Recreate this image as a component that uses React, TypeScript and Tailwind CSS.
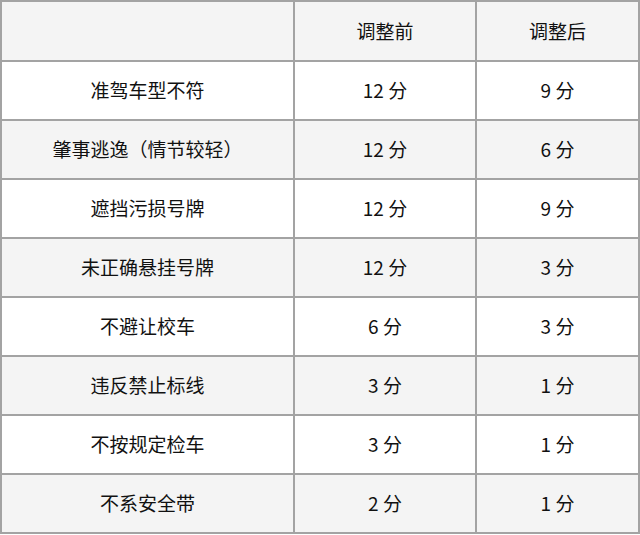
const rows = [
  { name: "准驾车型不符", before: "12 分", after: "9 分" },
  { name: "肇事逃逸（情节较轻）", before: "12 分", after: "6 分" },
  { name: "遮挡污损号牌", before: "12 分", after: "9 分" },
  { name: "未正确悬挂号牌", before: "12 分", after: "3 分" },
  { name: "不避让校车", before: "6 分", after: "3 分" },
  { name: "违反禁止标线", before: "3 分", after: "1 分" },
  { name: "不按规定检车", before: "3 分", after: "1 分" },
  { name: "不系安全带", before: "2 分", after: "1 分" },
];

export default function App() {
  return (
    <div className="w-[640px] h-[535px] bg-white font-['Noto_Sans_CJK_SC','Noto_Sans',sans-serif] text-[19px] font-normal text-[#111]">
      <table className="w-[638px] border-collapse table-fixed">
        <colgroup>
          <col className="w-[293px]" />
          <col className="w-[182px]" />
          <col className="w-[163px]" />
        </colgroup>
        <thead>
          <tr className="h-[60px] bg-[#f4f4f4]">
            <th className="border-2 border-[#a3a3a3] font-normal"></th>
            <th className="border-2 border-[#a3a3a3] font-normal">调整前</th>
            <th className="border-2 border-[#a3a3a3] font-normal">调整后</th>
          </tr>
        </thead>
        <tbody>
          {rows.map((r, i) => (
            <tr key={r.name} className={`h-[59px] ${i % 2 === 1 ? "bg-[#f4f4f4]" : "bg-white"}`}>
              <td className="border-2 border-[#a3a3a3] text-center">{r.name}</td>
              <td className="border-2 border-[#a3a3a3] text-center">{r.before}</td>
              <td className="border-2 border-[#a3a3a3] text-center">{r.after}</td>
            </tr>
          ))}
        </tbody>
      </table>
    </div>
  );
}
